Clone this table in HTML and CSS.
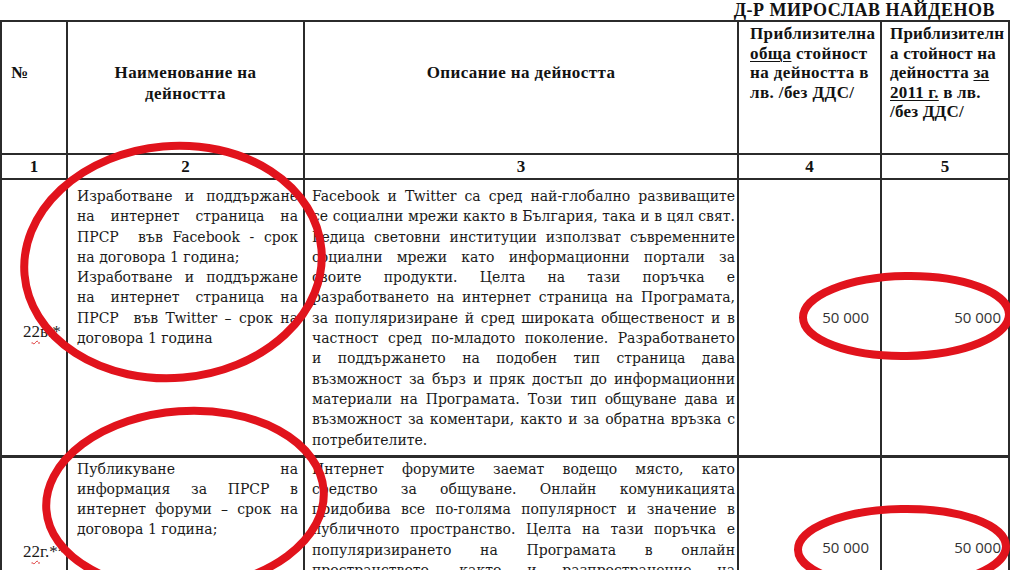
FILE: index.html
```html
<!DOCTYPE html>
<html lang="bg">
<head>
<meta charset="utf-8">
<title>Дейности – ПРСР</title>
<link rel="stylesheet" href="styles.css">
</head>
<body>
<div class="page">
  <div class="signer">Д-Р МИРОСЛАВ НАЙДЕНОВ</div>
  <table class="doc">
    <colgroup>
      <col class="c1"><col class="c2"><col class="c3"><col class="c4"><col class="c5">
    </colgroup>
    <tr class="head">
      <th class="hm left">№</th>
      <th class="hm">Наименование на<br>дейността</th>
      <th class="hm">Описание на дейността</th>
      <th class="ht h4">Приблизителна<br><u>обща</u> стойност<br>на дейността в<br>лв. /без ДДС/</th>
      <th class="ht h5">Приблизителн<br>а стойност на<br>дейността <u>за</u><br><u>2011 г.</u> в лв.<br>/без ДДС/</th>
    </tr>
    <tr class="nums">
      <th>1</th><th>2</th><th>3</th><th>4</th><th>5</th>
    </tr>
    <tr class="row r1">
      <td class="no">2<span class="sp">2</span>в.*</td>
      <td class="name">
        <span class="ln">Изработване и поддържане</span>
        <span class="ln">на интернет страница на</span>
        <span class="ln">ПРСР &nbsp;във Facebook - срок</span>
        <span class="ln end">на договора 1 година;</span>
        <span class="ln">Изработване и поддържане</span>
        <span class="ln">на интернет страница на</span>
        <span class="ln">ПРСР &nbsp;във Twitter – срок на</span>
        <span class="ln end">договора 1 година</span>
      </td>
      <td class="desc">
        <span class="ln">Facebook и Twitter са сред най-глобално развиващите</span>
        <span class="ln">се социални мрежи както в България, така и в цял свят.</span>
        <span class="ln">Редица световни институции използват съвременните</span>
        <span class="ln">социални мрежи като информационни портали за</span>
        <span class="ln">своите продукти. Целта на тази поръчка е</span>
        <span class="ln">разработването на интернет страница на Програмата,</span>
        <span class="ln">за популяризиране й сред широката общественост и в</span>
        <span class="ln">частност сред по-младото поколение. Разработването</span>
        <span class="ln">и поддържането на подобен тип страница дава</span>
        <span class="ln">възможност за бърз и пряк достъп до информационни</span>
        <span class="ln">материали на Програмата. Този тип общуване дава и</span>
        <span class="ln">възможност за коментари, както и за обратна връзка с</span>
        <span class="ln end">потребителите.</span>
      </td>
      <td class="sum s4">50 000</td>
      <td class="sum s5">50 000</td>
    </tr>
    <tr class="row r2">
      <td class="no">2<span class="sp">2</span>г.**</td>
      <td class="name">
        <span class="ln">Публикуване на</span>
        <span class="ln">информация за ПРСР в</span>
        <span class="ln">интернет форуми – срок на</span>
        <span class="ln end">договора 1 година;</span>
      </td>
      <td class="desc">
        <span class="ln">Интернет форумите заемат водещо място, като</span>
        <span class="ln">средство за общуване. Онлайн комуникацията</span>
        <span class="ln">придобива все по-голяма популярност и значение в</span>
        <span class="ln">публичното пространство. Целта на тази поръчка е</span>
        <span class="ln">популяризирането на Програмата в онлайн</span>
        <span class="ln">пространството, както и разпространение на</span>
      </td>
      <td class="sum s4">50 000</td>
      <td class="sum s5">50 000</td>
    </tr>
  </table>

  <svg class="marks" width="1010" height="570" viewBox="0 0 1010 570" aria-hidden="true">
    <g fill="none" stroke="#e1131c" stroke-width="8">
      <ellipse cx="173" cy="262" rx="149" ry="116" transform="rotate(-5 173 262)"/>
      <ellipse cx="185" cy="500" rx="139" ry="89" transform="rotate(-4 185 500)"/>
      <ellipse cx="906" cy="316" rx="103" ry="40" transform="rotate(-1 906 316)"/>
      <ellipse cx="902" cy="548" rx="104" ry="39" transform="rotate(-1 902 548)"/>
    </g>
  </svg>
</div>
</body>
</html>
```

FILE: styles.css
```css
html, body {
  margin: 0;
  padding: 0;
  overflow: hidden;
  background: #fff;
}

.page {
  position: relative;
  width: 1010px;
  height: 570px;
  overflow: hidden;
  font-family: "Liberation Serif", "Times New Roman", serif;
  color: #121212;
}

.signer {
  box-sizing: border-box;
  height: 20px;
  padding: 1px 15px 0 0;
  line-height: 18px;
  text-align: right;
  font-weight: bold;
  font-size: 18px;
  letter-spacing: 0.5px;
  white-space: nowrap;
}

.doc {
  border-collapse: collapse;
  table-layout: fixed;
  width: 1009px;
}

.doc th,
.doc td {
  border: 2px solid #2b2b2b;
  padding: 0;
}

.c1 { width: 66px; }
.c2 { width: 237px; }
.c3 { width: 434px; }
.c4 { width: 143px; }
.c5 { width: 128px; }

.head { height: 133px; }

.head th {
  font-size: 17px;
  font-weight: bold;
  letter-spacing: 0.4px;
  vertical-align: top;
  white-space: nowrap;
}

.hm {
  text-align: center;
  line-height: 21px;
  padding-top: 40px !important;
}

.hm.left {
  text-align: left;
  padding-left: 9px !important;
}

.ht {
  text-align: left;
  line-height: 19.5px;
  padding-top: 2px !important;
}

.h4 { padding-left: 11px !important; }
.h5 { padding-left: 8px !important; letter-spacing: 0.2px !important; }

.ht u {
  text-decoration-thickness: 1px;
  text-underline-offset: 2px;
}

.nums { height: 25px; }

.nums th {
  font-size: 17px;
  font-weight: bold;
  text-align: center;
  vertical-align: middle;
}

.row td {
  font-family: "DejaVu Serif", "Liberation Serif", serif;
  font-size: 14px;
  line-height: 20.3px;
  color: #1a1a1a;
}

.r1 { height: 277px; }
.r2 td { border-top-width: 3px; }

.row .no {
  font-family: "Liberation Serif", serif;
  font-size: 17px;
  padding-left: 21px !important;
  vertical-align: top;
}

.r1 .no { padding-top: 142px !important; }
.r2 .no { padding-top: 84px !important; }

.sp {
  text-decoration: underline wavy #d33;
  text-decoration-thickness: 1px;
  text-underline-offset: 3px;
}

.name {
  vertical-align: top;
  padding: 6px 5px 0 9px !important;
}

.desc {
  vertical-align: top;
  padding: 6px 2px 0 7px !important;
}

.r2 .name,
.r2 .desc {
  padding-top: 1px !important;
}

.ln {
  display: block;
  text-align: justify;
  text-align-last: justify;
}

.ln.end {
  text-align-last: left;
}

.row .sum {
  font-family: "Open Sans", "Noto Sans", sans-serif;
  font-size: 15px;
  color: #333;
  text-align: right;
  vertical-align: middle;
}

.s4 { padding-right: 11px !important; }
.s5 { padding-right: 7px !important; }

.r2 .sum {
  vertical-align: top;
  padding-top: 79px !important;
}

.marks {
  position: absolute;
  left: 0;
  top: 0;
  pointer-events: none;
}
```
